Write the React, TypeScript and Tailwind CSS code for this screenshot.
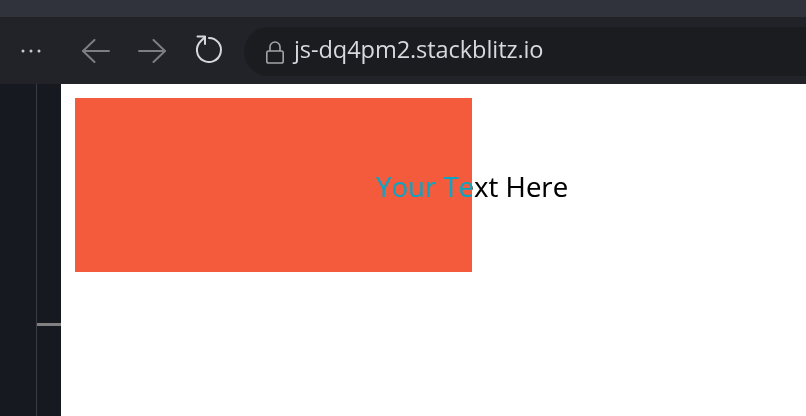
import React from 'react';

const Dots: React.FC = () => (
  <svg width="22" height="6" viewBox="0 0 22 6">
    <circle cx="3" cy="3" r="1.5" fill="#c9cacc" />
    <circle cx="11" cy="3" r="1.5" fill="#c9cacc" />
    <circle cx="19" cy="3" r="1.5" fill="#c9cacc" />
  </svg>
);

const Arrow: React.FC<{ dir: 'left' | 'right' }> = ({ dir }) => (
  <svg
    width="28"
    height="24"
    viewBox="0 0 28 24"
    fill="none"
    stroke="#7c7e82"
    strokeWidth="2"
    strokeLinecap="round"
    strokeLinejoin="round"
    className={dir === 'right' ? 'scale-x-[-1]' : ''}
  >
    <path d="M1 12 H27" />
    <path d="M12.5 1 L1 12 L12.5 23" />
  </svg>
);

const Reload: React.FC = () => (
  <svg width="32" height="32" viewBox="0 0 32 32" fill="none" stroke="#d6d7d9" strokeWidth="2" strokeLinecap="round" strokeLinejoin="round">
    <path d="M16 4 A12 12 0 1 1 7.5 7.5 L12 3" />
    <path d="M4.5 2.5 H12 V10" />
  </svg>
);

const Lock: React.FC = () => (
  <svg width="20" height="26" viewBox="0 0 20 26" fill="none" stroke="#a3a4a7" strokeWidth="1.6">
    <path d="M5 12 V8 a5 5 0 0 1 10 0 V12" />
    <rect x="1.8" y="12" width="16.4" height="12" rx="1.8" />
  </svg>
);

export default function App() {
  return (
    <div className="w-[806px] h-[416px] overflow-hidden flex flex-col bg-[#212328] font-['Open_Sans',sans-serif]">
      {/* Tab strip */}
      <div className="h-[17px] bg-[#30333c]" />

      {/* Toolbar */}
      <div className="h-[67px] flex items-center bg-[#212328]">
        <div className="w-[60px] flex justify-center pl-[2px]">
          <Dots />
        </div>
        <div className="flex items-center gap-[28px] ml-[22px]">
          <Arrow dir="left" />
          <Arrow dir="right" />
        </div>
        <div className="ml-[27px] mt-[-1px]">
          <Reload />
        </div>
        <div className="ml-[19px] flex-1 h-[49px] bg-[#1b1c20] rounded-l-[25px] flex items-center pl-[21px] mt-[2px]">
          <Lock />
          <span className="ml-[9px] text-[23.6px] leading-none text-[#d6d9de] tracking-[-0.1px] pb-[3px]">js-dq4pm2.stackblitz.io</span>
        </div>
      </div>

      {/* Body */}
      <div className="flex-1 flex">
        {/* Editor sidebar */}
        <div className="w-[61px] bg-[#161920] flex">
          <div className="w-[36px]" />
          <div className="w-px bg-[#3a3c42]" />
          <div className="flex-1 flex flex-col">
            <div className="h-[239px]" />
            <div className="h-[3px] bg-[#808082]" />
          </div>
        </div>

        {/* Preview */}
        <div className="flex-1 bg-white p-[14px]">
          <div className="flex items-center">
            <div className="w-[397px] h-[174px] bg-[#f35b3c] shrink-0" />
            <span className="ml-[-96px] mt-[3px] text-[27.6px] leading-none text-white mix-blend-difference whitespace-nowrap">
              Your Text Here
            </span>
          </div>
        </div>
      </div>
    </div>
  );
}
